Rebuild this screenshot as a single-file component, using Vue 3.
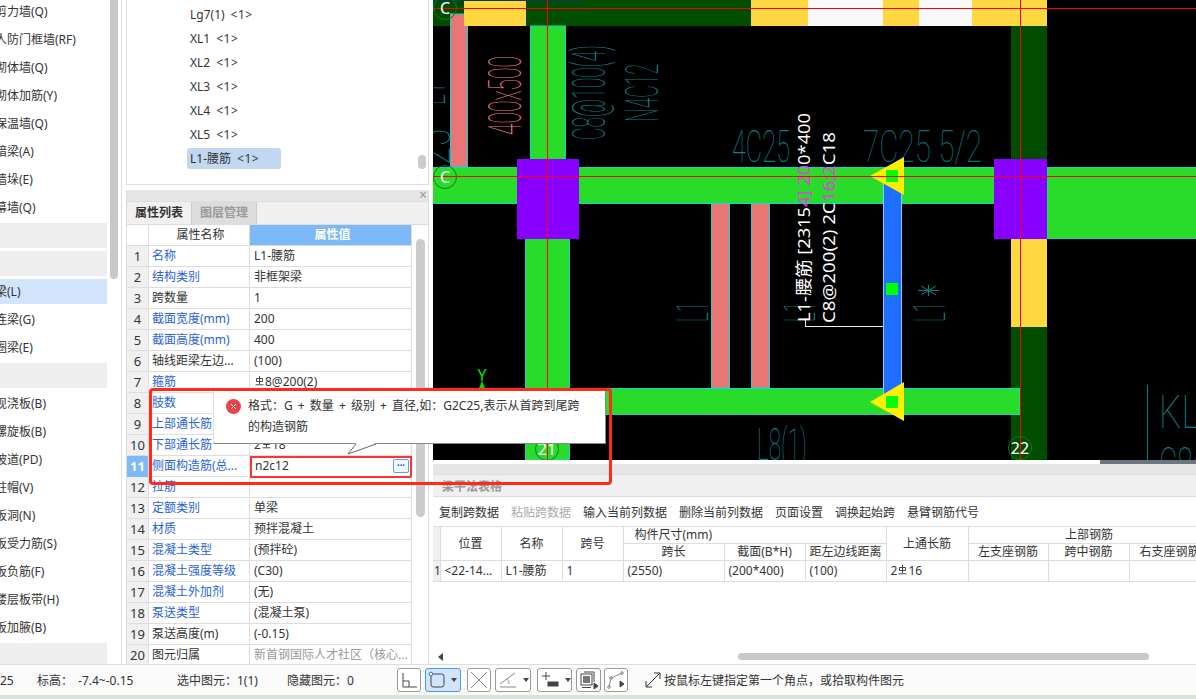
<template>
  <div class="app">
    <div class="main">
      <!-- 构件类型列表 -->
      <div class="side">
        <div class="side-list">
          <div v-for="(item, i) in sideItems" :key="i" class="side-row">
            <div class="side-in" :class="{ group: !item.text, active: item.active }">{{ item.text }}</div>
          </div>
        </div>
        <div class="side-bar"></div>
      </div>

      <div class="mid">
        <div class="comp-panel">
          <div v-for="c in components" :key="c.name" class="comp-row">
            <span class="comp-item" :class="{ on: c.on }">{{ c.name }}<i>&lt;1&gt;</i></span>
          </div>
          <div class="comp-thumb"></div>
        </div>

        <div class="prop-panel">
          <div class="prop-head"><span class="close">×</span></div>
          <div class="tabs">
            <div class="tab cur">属性列表</div>
            <div class="tab">图层管理</div>
          </div>
          <div class="prop-body">
            <div class="prop-table">
              <div class="prop-row head">
                <div class="num"></div>
                <div class="pname">属性名称</div>
                <div class="pval">属性值</div>
              </div>
              <div v-for="(r, i) in props" :key="r.name" class="prop-row" :class="{ editing: r.editing }">
                <div class="num">{{ i + 1 }}</div>
                <div class="pname" :class="{ link: r.link }">{{ r.name }}</div>
                <div class="pval" :class="{ muted: r.muted }">
                  <template v-if="r.bar">{{ r.pre }}<svg class="bar-sym" viewBox="0 0 9 10"><path d="M4.5 0V8M1.5 2.5H7.5V5.5H1.5ZM0.5 8.8H8.5" /></svg>{{ r.value }}</template>
                  <template v-else>{{ r.value }}</template>
                  <span v-if="r.editing" class="dots">•••</span>
                </div>
              </div>
            </div>
            <div class="prop-scroll"></div>
          </div>
        </div>
      </div>

      <div class="right">
        <svg class="cad" viewBox="433 0 763 460" width="763" height="460">
          <rect x="433" y="0" width="763" height="460" fill="#000" />
          <!-- 顶部梁带 -->
          <rect x="433" y="0" width="31" height="26" fill="#004d00" />
          <rect x="450.500" y="14" width="17" height="153" fill="#ea7575" stroke="#14d2dc" />
          <rect x="464" y="0" width="62" height="26" fill="#ffd740" />
          <rect x="526" y="0" width="225" height="26" fill="#004d00" />
          <rect x="751" y="0" width="57" height="26" fill="#ffd740" />
          <rect x="808" y="0" width="75" height="26" fill="#f8f8f8" />
          <rect x="883" y="0" width="36" height="26" fill="#ffd740" />
          <rect x="919" y="0" width="53" height="26" fill="#f8f8f8" />
          <rect x="972" y="0" width="75" height="26" fill="#ffd740" />
          <rect x="433" y="0" width="149" height="1" fill="#0a3a6a" />

          <!-- 柱和梁 -->
          <rect x="530.500" y="26" width="35" height="134" fill="#2adc2a" stroke="#14d2dc" />
          <rect x="525.500" y="238" width="44" height="222" fill="#2adc2a" stroke="#14d2dc" />
          <rect x="1011" y="26" width="36" height="134" fill="#004d00" />
          <rect x="1011" y="239" width="36" height="88" fill="#ffd740" />
          <rect x="1011" y="327" width="36" height="133" fill="#004d00" />
          <rect x="711.500" y="203" width="18" height="185" fill="#ea7575" stroke="#14d2dc" />
          <rect x="751.500" y="203" width="18" height="185" fill="#ea7575" stroke="#14d2dc" />
          <rect x="432" y="167.500" width="770" height="36" fill="#2adc2a" stroke="#14d2dc" />
          <rect x="1047" y="167.500" width="155" height="71" fill="#2adc2a" stroke="#14d2dc" />
          <rect x="520" y="388.500" width="500" height="26" fill="#2adc2a" stroke="#14d2dc" />
          <rect x="526" y="389" width="44" height="25" fill="#2adc2a" />
          <rect x="517" y="159" width="62" height="80" fill="#8800ff" />
          <rect x="994" y="159" width="53" height="80" fill="#8800ff" />

          <!-- CAD 标注 -->
          <g class="cad-text" fill="#0b7f86">
            <text transform="translate(445,105) rotate(-90)" font-size="46" textLength="22" lengthAdjust="spacingAndGlyphs">L1</text>
            <text transform="translate(450,165) rotate(-90)" font-size="46" textLength="36" lengthAdjust="spacingAndGlyphs">25</text>
            <text transform="translate(605,140) rotate(-90)" font-size="46" textLength="95" lengthAdjust="spacingAndGlyphs">C8@100(4)</text>
            <text transform="translate(658,122) rotate(-90)" font-size="46" textLength="58" lengthAdjust="spacingAndGlyphs">N4C12</text>
            <text x="732" y="162" font-size="44" textLength="58" lengthAdjust="spacingAndGlyphs">4C25</text>
            <text x="863" y="162" font-size="44" textLength="119" lengthAdjust="spacingAndGlyphs" fill="#066d72">7C25 5/2</text>
            <text transform="translate(708,322) rotate(-90)" font-size="44" textLength="20" lengthAdjust="spacingAndGlyphs">L1</text>
            <text transform="translate(815,322) rotate(-90)" font-size="44" textLength="20" lengthAdjust="spacingAndGlyphs">L1</text>
            <text transform="translate(945,322) rotate(-90)" font-size="44" textLength="20" lengthAdjust="spacingAndGlyphs">L1</text>
            <text x="757" y="460" font-size="44" textLength="50" lengthAdjust="spacingAndGlyphs">L8(1)</text>
            <text x="1159" y="428" font-size="46" textLength="60" lengthAdjust="spacingAndGlyphs">KL2</text>
            <text x="1159" y="480" font-size="46" textLength="60" lengthAdjust="spacingAndGlyphs">C8@</text>
          </g>
          <text class="cad-text" transform="translate(521,135) rotate(-90)" fill="#ea7575" font-size="46" textLength="79" lengthAdjust="spacingAndGlyphs">400x500</text>
          <path d="M918 290.500H939M921 286L936 295M936 286L921 295M928.500 285V296" stroke="#0b7f86" fill="none" />
          <path d="M1147.500 385V460" stroke="#0b7f86" fill="none" />

          <text class="note" transform="translate(810,322) rotate(-90)" font-size="17" textLength="209" lengthAdjust="spacingAndGlyphs">L1-腰筋 [2315<tspan fill="#e040e0">4] 20</tspan>0*400</text>
          <text class="note" transform="translate(835,323) rotate(-90)" font-size="17" textLength="191" lengthAdjust="spacingAndGlyphs">C8@200(2) 2C<tspan fill="#e040e0">16;2</tspan>C18</text>
          <path d="M805 326.500H883M805.500 318V327" stroke="#eee" fill="none" />

          <!-- 选中的梁 -->
          <rect x="883.500" y="177" width="18" height="225" fill="#1e6eff" stroke="#7fd0ff" />
          <path d="M870 176L904 157V195Z M870 402L904 382V421Z" fill="#ffee00" />
          <rect x="886" y="170" width="12" height="12" fill="#00ff00" />
          <rect x="886" y="283" width="12" height="12" fill="#00ff00" />
          <rect x="886" y="396" width="12" height="12" fill="#00ff00" />

          <!-- 轴线 -->
          <path d="M433 8.500H1196M433 176.500H1196" stroke="#ff0000" />
          <path d="M547.500 0V460M1020.500 0V460" stroke="#ff0000" />

          <g v-for="a in axes" :key="a.label + a.y">
            <circle :cx="a.x" :cy="a.y" r="11.500" fill="none" stroke="#0e7a18" />
            <text class="axis" :x="a.x" :y="a.y + 6" text-anchor="middle">{{ a.label }}</text>
          </g>

          <text class="axis" x="482" y="381" text-anchor="middle" style="fill:#00e000">Y</text>
          <path d="M482 381L479 388H485Z" fill="#00e000" />
        </svg>

        <div class="h-strip"><div class="h-thumb"></div></div>
        <div class="tbl-head"></div>
        <div class="tbl-title">梁平法表格</div>
        <div class="tbl-tools">
          <span>复制跨数据</span>
          <span class="off">粘贴跨数据</span>
          <span>输入当前列数据</span>
          <span>删除当前列数据</span>
          <span>页面设置</span>
          <span>调换起始跨</span>
          <span>悬臂钢筋代号</span>
        </div>
        <table class="span-table">
          <colgroup>
            <col v-for="(w, i) in colWidths" :key="i" :style="{ width: w + 'px' }" />
          </colgroup>
          <thead>
            <tr>
              <th rowspan="2" class="gutter"></th>
              <th rowspan="2">位置</th>
              <th rowspan="2">名称</th>
              <th rowspan="2">跨号</th>
              <th colspan="3" class="size-th">构件尺寸(mm)</th>
              <th rowspan="2">上通长筋</th>
              <th colspan="3">上部钢筋</th>
            </tr>
            <tr>
              <th>跨长</th>
              <th>截面(B*H)</th>
              <th>距左边线距离</th>
              <th>左支座钢筋</th>
              <th>跨中钢筋</th>
              <th>右支座钢筋</th>
            </tr>
          </thead>
          <tbody>
            <tr>
              <td class="gutter">1</td>
              <td>&lt;22-14...</td>
              <td>L1-腰筋</td>
              <td>1</td>
              <td>(2550)</td>
              <td>(200*400)</td>
              <td>(100)</td>
              <td>2<svg class="bar-sym" viewBox="0 0 9 10"><path d="M4.5 0V8M1.5 2.5H7.5V5.5H1.5ZM0.5 8.8H8.5" /></svg>16</td>
              <td></td>
              <td></td>
              <td></td>
            </tr>
          </tbody>
        </table>
        <div class="tbl-scroll">
          <span class="arrow-left"></span>
          <div class="tbl-thumb"></div>
        </div>
      </div>
    </div>

    <div class="status">
      <span class="stat s1">25</span>
      <span class="stat s2">标高：<span class="stat-val">-7.4~-0.15</span></span>
      <span class="stat s3">选中图元：1(1)</span>
      <span class="stat s3">隐藏图元：0</span>
      <div class="tools">
        <button class="tool t24">
          <svg width="22" height="22" viewBox="0 0 22 22"><path d="M5 4V18H19M5 12H11V18" /></svg>
        </button>
        <button class="tool t36 sel">
          <svg width="22" height="22" viewBox="0 0 22 22"><rect x="5" y="5" width="13" height="13" rx="2.500" /><circle cx="5" cy="5" r="1.800" class="blue" /></svg>
          <span class="caret"></span>
        </button>
        <button class="tool t24">
          <svg width="22" height="22" viewBox="0 0 22 22"><path d="M3 3L19 19M19 3L3 19" class="pale" /></svg>
        </button>
        <button class="tool t36">
          <svg width="24" height="22" viewBox="0 0 24 22"><path d="M4 15L19 4M11 10C12.500 12 13 13 13 15" class="pale" /><path d="M4 18H20" class="pale" /></svg>
          <span class="caret"></span>
        </button>
        <button class="tool t35">
          <svg width="24" height="22" viewBox="0 0 24 22"><path d="M8 3V11M4 7H12" /><rect x="10" y="13" width="10" height="4" class="solid" /></svg>
          <span class="caret"></span>
        </button>
        <button class="tool t25">
          <svg width="22" height="22" viewBox="0 0 22 22"><path d="M7 3H17V13" /><rect x="4" y="5" width="11" height="11" /><rect x="6" y="7" width="7" height="7" class="solid grey" /><path d="M5 18.500H14" /><path d="M17 14L21 17L17 20Z" class="solid" /></svg>
        </button>
        <button class="tool t24">
          <svg width="22" height="22" viewBox="0 0 22 22"><path d="M4 18L6 9L17 4" class="pale" /><circle cx="4" cy="18" r="1.300" class="pale" /><circle cx="6" cy="9" r="1.300" class="pale" /><circle cx="17" cy="4" r="1.300" class="pale" /><path d="M15 12L19 15L15 18Z" class="solid" /></svg>
        </button>
      </div>
      <svg class="hint-icon" width="16" height="16" viewBox="0 0 16 16"><path d="M1 15L15 1M9 1H15V7M1 9V15H7" /></svg>
      <span class="hint">按鼠标左键指定第一个角点，或拾取构件图元</span>
    </div>
    <div class="foot"></div>

    <!-- 错误提示和红框 -->
    <div class="tip">
      <svg class="tip-icon" width="15" height="15" viewBox="0 0 15 15"><circle cx="7.500" cy="7.500" r="7.500" fill="#e8434b" /><path d="M5 5L10 10M10 5L5 10" stroke="#fff" fill="none" /></svg>
      <div class="tip-text">格式：G + 数量 + 级别 + 直径,如：G2C25,表示从首跨到尾跨</div>
      <div class="tip-text">的构造钢筋</div>
      <svg class="tip-tail" width="32" height="12" viewBox="0 0 32 12"><path d="M2 11L10 0H30Z" fill="#fff" /><path d="M10 1L2 11L30 1" stroke="#666" fill="none" /></svg>
    </div>
    <div class="red-box"></div>
  </div>
</template>

<script setup>
const sideItems = [
  { text: '剪力墙(Q)' },
  { text: '人防门框墙(RF)' },
  { text: '砌体墙(Q)' },
  { text: '砌体加筋(Y)' },
  { text: '保温墙(Q)' },
  { text: '暗梁(A)' },
  { text: '墙垛(E)' },
  { text: '幕墙(Q)' },
  { text: '' },
  { text: '' },
  { text: '梁(L)', active: true },
  { text: '连梁(G)' },
  { text: '圈梁(E)' },
  { text: '' },
  { text: '现浇板(B)' },
  { text: '螺旋板(B)' },
  { text: '坡道(PD)' },
  { text: '柱帽(V)' },
  { text: '板洞(N)' },
  { text: '板受力筋(S)' },
  { text: '板负筋(F)' },
  { text: '楼层板带(H)' },
  { text: '板加腋(B)' },
  { text: '' }
];

const components = [
  { name: 'Lg7(1)' },
  { name: 'XL1' },
  { name: 'XL2' },
  { name: 'XL3' },
  { name: 'XL4' },
  { name: 'XL5' },
  { name: 'L1-腰筋', on: true }
];

const props = [
  { name: '名称', value: 'L1-腰筋', link: true },
  { name: '结构类别', value: '非框架梁', link: true },
  { name: '跨数量', value: '1' },
  { name: '截面宽度(mm)', value: '200', link: true },
  { name: '截面高度(mm)', value: '400', link: true },
  { name: '轴线距梁左边...', value: '(100)' },
  { name: '箍筋', pre: '', bar: true, value: '8@200(2)', link: true },
  { name: '肢数', value: '2', link: true },
  { name: '上部通长筋', pre: '2', bar: true, value: '16', link: true },
  { name: '下部通长筋', pre: '2', bar: true, value: '18', link: true },
  { name: '侧面构造筋(总...', value: 'n2c12', link: true, editing: true },
  { name: '拉筋', value: '', link: true },
  { name: '定额类别', value: '单梁', link: true },
  { name: '材质', value: '预拌混凝土', link: true },
  { name: '混凝土类型', value: '(预拌砼)', link: true },
  { name: '混凝土强度等级', value: '(C30)', link: true },
  { name: '混凝土外加剂', value: '(无)', link: true },
  { name: '泵送类型', value: '(混凝土泵)', link: true },
  { name: '泵送高度(m)', value: '(-0.15)' },
  { name: '图元归属', value: '新首钢国际人才社区（核心...', muted: true }
];

const axes = [
  { label: 'C', x: 445, y: 8 },
  { label: 'C', x: 445, y: 177 },
  { label: '21', x: 547, y: 449 },
  { label: '22', x: 1020, y: 448 }
];

const colWidths = [7, 61, 61, 61, 101, 81, 81, 82, 80, 81, 81];
</script>

<style>
html, body {
  margin: 0;
  background: #fff;
  overflow: hidden;
}
</style>

<style scoped>
.app {
  position: relative;
  width: 1196px;
  height: 699px;
  overflow: hidden;
  display: flex;
  flex-direction: column;
  background: #fff;
  color: #333;
  font-family: "Noto Sans", "Noto Sans CJK SC", sans-serif;
  font-size: 12px;
}

.main {
  display: flex;
  height: 664px;
  overflow: hidden;
}

.side {
  width: 121px;
  height: 664px;
  flex: none;
  border-right: 1px solid #ddd;
  display: flex;
  overflow: hidden;
}
.side-list {
  width: 107px;
  flex: none;
  margin-top: -2px;
  overflow: hidden;
}
.side-row {
  height: 28px;
  padding: 1px 0 2px;
  box-sizing: border-box;
}
.side-in {
  height: 25px;
  line-height: 25px;
  white-space: nowrap;
  text-indent: -5px;
}
.side-in.group {
  background: #eee;
}
.side-in.active {
  background: #d0e4fb;
}
.side-bar {
  width: 8px;
  height: 279px;
  margin-left: 3px;
  background: #c8c8c8;
  border-radius: 0 0 4px 4px;
}

.mid {
  width: 303px;
  flex: none;
  margin-left: 4px;
  display: flex;
  flex-direction: column;
}

.comp-panel {
  position: relative;
  height: 185px;
  flex: none;
  box-sizing: border-box;
  padding: 2px 0 0 60px;
  border: 1px solid #ddd;
  border-top: 0;
}
.comp-row {
  height: 24px;
  display: flex;
  align-items: center;
}
.comp-item {
  height: 21px;
  line-height: 21px;
  padding-left: 3px;
  border-radius: 3px;
}
.comp-item i {
  font-style: normal;
  margin-left: 6px;
  letter-spacing: 0.5px;
}
.comp-item.on {
  width: 91px;
  background: #c2d8f0;
}
.comp-thumb {
  position: absolute;
  right: 2px;
  top: 155px;
  width: 8px;
  height: 14px;
  border-radius: 4px;
  background: #ccc;
}

.prop-panel {
  margin-top: 5px;
  flex: 1;
  min-height: 0;
  display: flex;
  flex-direction: column;
  border-left: 1px solid #ddd;
  border-right: 1px solid #ddd;
}
.prop-head {
  height: 11px;
  flex: none;
  background: #e6e6e6;
  position: relative;
}
.close {
  position: absolute;
  right: 1px;
  top: -3px;
  line-height: 16px;
  font-size: 14px;
  color: #999;
}
.tabs {
  height: 23px;
  flex: none;
  display: flex;
  background: #f0f0f0;
  border-top: 1px solid #ddd;
  box-sizing: border-box;
}
.tab {
  width: 65px;
  line-height: 22px;
  text-align: center;
  font-weight: 700;
  color: #999;
  background: #ddd;
  border-right: 1px solid #ccc;
  box-sizing: border-box;
}
.tab.cur {
  color: #333;
  background: #f0f0f0;
}

.prop-body {
  display: flex;
  flex: 1;
  min-height: 0;
  border-top: 1px solid #ddd;
}
.prop-table {
  width: 285px;
  flex: none;
}
.prop-row {
  display: grid;
  grid-template-columns: 22px 101px 162px;
  height: 21px;
  box-sizing: border-box;
  border-bottom: 1px solid #ddd;
  line-height: 20px;
}
.num {
  background: #f0f0f0;
  border-right: 1px solid #ddd;
  text-align: center;
  font-size: 13px;
}
.prop-row.head .num {
  background: #fff;
}
.pname {
  padding-left: 3px;
  border-right: 1px solid #ddd;
  white-space: nowrap;
  overflow: hidden;
}
.pname.link {
  color: #2a5fdc;
}
.prop-row.head .pname {
  text-align: center;
}
.prop-row.head .pval {
  background: #7db8f7;
  color: #fff;
  text-align: center;
  font-weight: 700;
}
.pval {
  padding-left: 4px;
  border-right: 1px solid #ddd;
  white-space: nowrap;
  overflow: hidden;
  position: relative;
}
.pval.muted {
  color: #999;
}
.prop-row.editing .num {
  background: #7db8f7;
  color: #fff;
  font-weight: 700;
}
.prop-row.editing .pval {
  border: 2px solid #f33;
  padding-left: 3px;
  line-height: 15px;
  box-sizing: border-box;
  height: 22px;
  margin-bottom: -1px;
}
.dots {
  position: absolute;
  right: 1px;
  top: 1px;
  width: 16px;
  height: 14px;
  box-sizing: border-box;
  line-height: 12px;
  text-align: center;
  font-size: 7px;
  color: #1d6fd0;
  border: 1px solid #5aa0ea;
  border-radius: 2px;
  background: #f2f8ff;
}
.bar-sym {
  width: 9px;
  height: 10px;
  margin: 0 1px;
  vertical-align: 0;
}
.bar-sym path {
  fill: none;
  stroke: #333;
  stroke-width: 0.9;
}
.prop-scroll {
  width: 9px;
  height: 278px;
  margin: 14px 0 0 4px;
  border-radius: 5px;
  background: #ccc;
}

.right {
  flex: 1;
  margin-left: 4px;
  min-width: 0;
  display: flex;
  flex-direction: column;
  overflow: hidden;
}
.cad {
  display: block;
  flex: none;
}
.cad-text {
  font-family: "Roboto", "Liberation Sans", sans-serif;
  font-weight: 100;
}
.note {
  font-family: "Noto Sans", "Noto Sans CJK SC", sans-serif;
  fill: #fff;
}
.axis {
  font-family: "Noto Sans", sans-serif;
  font-size: 16px;
  fill: #fff;
}

.h-strip {
  height: 4px;
  flex: none;
  display: flex;
  justify-content: flex-end;
}
.h-thumb {
  width: 96px;
  background: #6b7680;
}
.tbl-head {
  height: 11px;
  flex: none;
  background: #e6e6e6;
  border-bottom: 1px solid #ddd;
  box-sizing: border-box;
}
.tbl-title {
  height: 22px;
  flex: none;
  line-height: 24px;
  padding-left: 9px;
  color: #999;
  font-weight: 700;
  background: #f0f0f0;
  border-bottom: 1px solid #ddd;
  box-sizing: border-box;
}
.tbl-tools {
  height: 29px;
  flex: none;
  padding-left: 6px;
  display: flex;
  align-items: center;
  gap: 12px;
  white-space: nowrap;
}
.tbl-tools .off {
  color: #aaa;
}

.span-table {
  table-layout: fixed;
  width: 777px;
  flex: none;
  border-collapse: collapse;
}
.span-table th,
.span-table td {
  border: 1px solid #ddd;
  padding: 0;
  font-weight: 400;
  white-space: nowrap;
  overflow: hidden;
}
.span-table th {
  height: 16px;
  line-height: 16px;
  text-align: center;
}
.span-table td {
  height: 20px;
  line-height: 20px;
  padding-left: 4px;
}
.span-table .gutter {
  background: #f0f0f0;
  padding-left: 1px;
  border-left: 0;
}
.span-table .size-th {
  text-align: left;
  padding-left: 11px;
}

.tbl-scroll {
  margin-top: auto;
  margin-bottom: 4px;
  height: 7px;
  flex: none;
  position: relative;
}
.arrow-left {
  position: absolute;
  left: 5px;
  top: 0;
  border: 4px solid transparent;
  border-left: 0;
  border-right: 5px solid #444;
}
.tbl-thumb {
  margin-left: 305px;
  width: 411px;
  height: 7px;
  border-radius: 4px;
  background: #c8c8c8;
}

.status {
  height: 31px;
  flex: none;
  display: flex;
  align-items: center;
  border-top: 1px solid #ddd;
  background: #fafafa;
  box-sizing: border-box;
  white-space: nowrap;
}
.stat {
  flex: none;
}
.stat-val {
  margin-left: 5px;
}
.s1 {
  width: 37px;
}
.s2 {
  width: 140px;
}
.s3 {
  width: 110px;
}
.tools {
  display: flex;
  flex: none;
  width: 248px;
}
.tool {
  height: 24px;
  padding: 0;
  flex: none;
  display: flex;
  align-items: center;
  border: 1px solid #999;
  border-radius: 3px;
  background: #fff;
  box-sizing: border-box;
}
.tool svg {
  flex: none;
}
.tool svg path,
.tool svg rect,
.tool svg circle {
  stroke: #444;
  fill: none;
}
.tool svg .solid {
  fill: #444;
}
.tool svg .grey {
  fill: #777;
  stroke: none;
}
.tool svg .pale {
  stroke: #888;
}
.tool svg .blue {
  stroke: #1d7ae0;
  fill: #fff;
}
.t24 {
  width: 24px;
  margin-right: 4px;
}
.t36 {
  width: 36px;
  margin-right: 6px;
}
.t35 {
  width: 35px;
  margin-right: 4px;
}
.t25 {
  width: 25px;
  margin-right: 3px;
}
.tool.sel {
  background: #d0e4fb;
  border-color: #4a98ee;
}
.caret {
  margin-left: 3px;
  border: 3px solid transparent;
  border-top: 4px solid #444;
  border-bottom: 0;
}
.hint-icon {
  flex: none;
  margin-right: 3px;
}
.hint-icon path {
  fill: none;
  stroke: #333;
}
.foot {
  flex: 1;
  background: #d5e5dc;
}

.tip {
  position: absolute;
  left: 213px;
  top: 391px;
  width: 393px;
  height: 53px;
  box-sizing: border-box;
  padding: 4px 0 0 34px;
  background: #fff;
  border: 1px solid #8a8a8a;
  border-width: 0 1px 1px 0;
  line-height: 21px;
  border-left: 1px solid #ddd;
}
.tip-text {
  white-space: nowrap;
  word-spacing: 2px;
}
.tip-icon {
  position: absolute;
  left: 12px;
  top: 8px;
}
.tip-tail {
  position: absolute;
  left: 132px;
  top: 52px;
}
.red-box {
  position: absolute;
  left: 149px;
  top: 388px;
  width: 463px;
  height: 97px;
  box-sizing: border-box;
  border: 3px solid #ff2a1a;
  border-radius: 4px;
  pointer-events: none;
}
</style>
